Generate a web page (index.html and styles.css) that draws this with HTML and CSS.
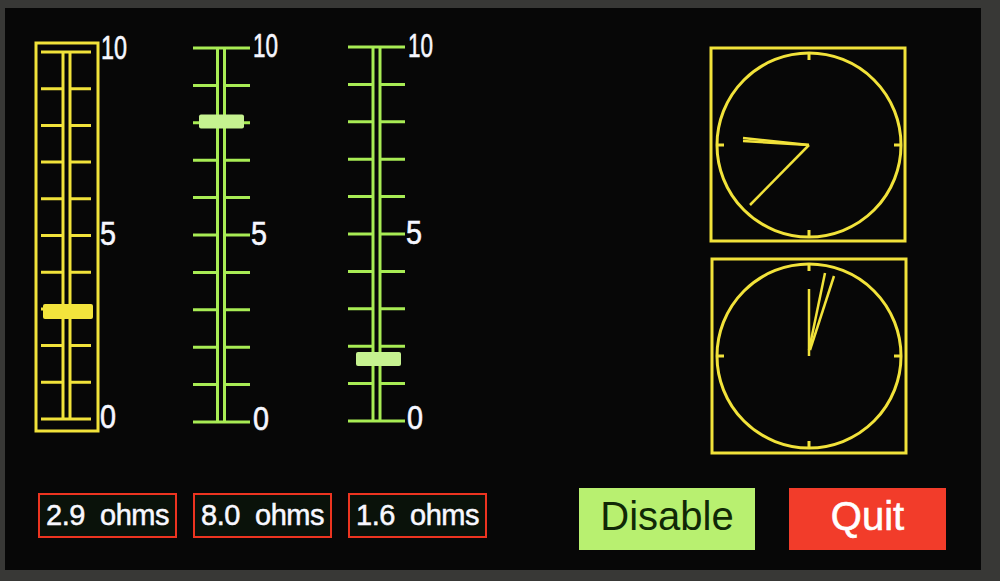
FILE: index.html
```html
<!DOCTYPE html>
<html>
<head>
<meta charset="utf-8">
<link rel="stylesheet" href="styles.css">
</head>
<body>
<div class="screen">
  <div class="top">
    <div class="sliders">
      <svg class="gauge" width="113" height="430" viewBox="0 -10 113 430">
        <rect x="6" y="13" width="62" height="388" fill="none" stroke="#f1e23a" stroke-width="3"/>
        <g stroke="#f1e23a" stroke-width="3">
          <line x1="33" y1="22" x2="33" y2="389"/>
          <line x1="40" y1="22" x2="40" y2="389"/>
          <line x1="11" y1="22" x2="61" y2="22"/>
          <line x1="11" y1="389" x2="61" y2="389"/>
          <path d="M11 58.7H33M40 58.7H61M11 95.4H33M40 95.4H61M11 132.1H33M40 132.1H61M11 168.8H33M40 168.8H61M11 205.5H33M40 205.5H61M11 242.2H33M40 242.2H61M11 278.9H33M40 278.9H61M11 315.6H33M40 315.6H61M11 352.3H33M40 352.3H61"/>
        </g>
        <rect x="13" y="274" width="50" height="15" rx="2" fill="#f3e43c"/>
        <g class="scale">
          <text x="71" y="29" textLength="26" lengthAdjust="spacingAndGlyphs">10</text>
          <text x="70" y="215" textLength="16" lengthAdjust="spacingAndGlyphs">5</text>
          <text x="70" y="398" textLength="16" lengthAdjust="spacingAndGlyphs">0</text>
        </g>
      </svg>
      <svg class="gauge" width="110" height="430" viewBox="0 -10 110 430">
        <g stroke="#a8ec54" stroke-width="3">
          <line x1="29.5" y1="18" x2="29.5" y2="392"/>
          <line x1="36.5" y1="18" x2="36.5" y2="392"/>
          <line x1="5" y1="18" x2="62" y2="18"/>
          <line x1="5" y1="392" x2="62" y2="392"/>
          <path d="M5 55.4H29.5M36.5 55.4H62M5 92.8H29.5M36.5 92.8H62M5 130.2H29.5M36.5 130.2H62M5 167.6H29.5M36.5 167.6H62M5 205H29.5M36.5 205H62M5 242.4H29.5M36.5 242.4H62M5 279.8H29.5M36.5 279.8H62M5 317.2H29.5M36.5 317.2H62M5 354.6H29.5M36.5 354.6H62"/>
        </g>
        <rect x="11" y="84.5" width="45" height="14" rx="2" fill="#c6f290"/>
        <g class="scale">
          <text x="65" y="27" textLength="25" lengthAdjust="spacingAndGlyphs">10</text>
          <text x="63" y="215" textLength="16" lengthAdjust="spacingAndGlyphs">5</text>
          <text x="65" y="400" textLength="16" lengthAdjust="spacingAndGlyphs">0</text>
        </g>
      </svg>
      <svg class="gauge" width="110" height="430" viewBox="0 -10 110 430">
        <g stroke="#a8ec54" stroke-width="3">
          <line x1="30" y1="17" x2="30" y2="391"/>
          <line x1="37" y1="17" x2="37" y2="391"/>
          <line x1="5" y1="17" x2="62" y2="17"/>
          <line x1="5" y1="391" x2="62" y2="391"/>
          <path d="M5 54.4H30M37 54.4H62M5 91.8H30M37 91.8H62M5 129.2H30M37 129.2H62M5 166.6H30M37 166.6H62M5 204H30M37 204H62M5 241.4H30M37 241.4H62M5 278.8H30M37 278.8H62M5 316.2H30M37 316.2H62M5 353.6H30M37 353.6H62"/>
        </g>
        <rect x="13" y="322" width="45" height="14" rx="2" fill="#c6f290"/>
        <g class="scale">
          <text x="65" y="27" textLength="25" lengthAdjust="spacingAndGlyphs">10</text>
          <text x="63" y="214" textLength="16" lengthAdjust="spacingAndGlyphs">5</text>
          <text x="64" y="399" textLength="16" lengthAdjust="spacingAndGlyphs">0</text>
        </g>
      </svg>
    </div>
    <div class="clocks">
      <svg class="clock" width="200" height="200" viewBox="0 0 200 200">
        <g fill="none" stroke="#f1e23a" stroke-width="3">
          <rect x="2" y="3" width="194" height="193"/>
          <circle cx="100" cy="100" r="92"/>
          <path d="M100 8V15M100 192V185M8 100H15M192 100H185"/>
        </g>
        <g stroke="#f1e23a" stroke-width="2.5">
          <line x1="100" y1="100" x2="34" y2="93"/>
          <line x1="100" y1="100" x2="34" y2="96"/>
          <line x1="100" y1="100" x2="41" y2="160"/>
        </g>
      </svg>
      <svg class="clock" width="200" height="200" viewBox="0 0 200 200">
        <g fill="none" stroke="#f1e23a" stroke-width="3">
          <rect x="3" y="3" width="194" height="194"/>
          <circle cx="100" cy="100" r="92"/>
          <path d="M100 8V15M100 192V185M8 100H15M192 100H185"/>
        </g>
        <g stroke="#f1e23a" stroke-width="2.5">
          <line x1="100" y1="100" x2="100" y2="33"/>
          <line x1="100" y1="94" x2="116" y2="17"/>
          <line x1="101" y1="94" x2="125" y2="20"/>
        </g>
      </svg>
    </div>
  </div>
  <div class="bottom">
    <div class="readouts">
      <div class="readout">2.9  ohms</div>
      <div class="readout">8.0  ohms</div>
      <div class="readout">1.6  ohms</div>
    </div>
    <div class="btn btn-disable">Disable</div>
    <div class="btn btn-quit">Quit</div>
  </div>
</div>
</body>
</html>
```
FILE: styles.css
```css
html, body {
  margin: 0;
  padding: 0;
}
body {
  width: 1000px;
  height: 581px;
  overflow: hidden;
  background: #383836;
  font-family: "Liberation Sans", Arial, sans-serif;
}
.screen {
  margin: 8px 0 0 5px;
  width: 976px;
  height: 562px;
  background: #070707;
  box-sizing: border-box;
  padding: 12px 0 0 25px;
  display: flex;
  flex-direction: column;
}
.top {
  display: flex;
  justify-content: space-between;
  align-items: flex-start;
  height: 467px;
}
.sliders {
  display: flex;
  gap: 45px;
}
.gauge {
  display: block;
}
.scale text {
  fill: #f6f7ff;
  font-family: "Liberation Sans", Arial, sans-serif;
  font-size: 33px;
  stroke: #f6f7ff;
  stroke-width: 0.6px;
}
.clocks {
  display: flex;
  flex-direction: column;
  gap: 11px;
  margin-top: 25px;
  margin-right: 72px;
}
.clock {
  display: block;
}
.bottom {
  display: flex;
  align-items: center;
  height: 63px;
  padding-left: 8px;
}
.readouts {
  display: flex;
  gap: 16px;
  margin-bottom: 6px;
}
.readout {
  width: 139px;
  height: 45px;
  box-sizing: border-box;
  border: 2.5px solid #ec3420;
  background: #0a120a;
  color: #f8f8ff;
  font-size: 29px;
  letter-spacing: -0.5px;
  white-space: pre;
  -webkit-text-stroke: 0.5px #f8f8ff;
  display: flex;
  align-items: center;
  justify-content: center;
}
.btn {
  height: 62px;
  display: flex;
  align-items: center;
  justify-content: center;
  font-size: 40px;
  box-sizing: border-box;
  padding-bottom: 5px;
}
.btn-disable {
  margin-left: 92px;
  width: 176px;
  background: #b8f070;
  color: #102806;
}
.btn-quit {
  margin-left: 34px;
  width: 157px;
  background: #f23c2a;
  color: #ffffff;
  -webkit-text-stroke: 0.6px #ffffff;
}
```
